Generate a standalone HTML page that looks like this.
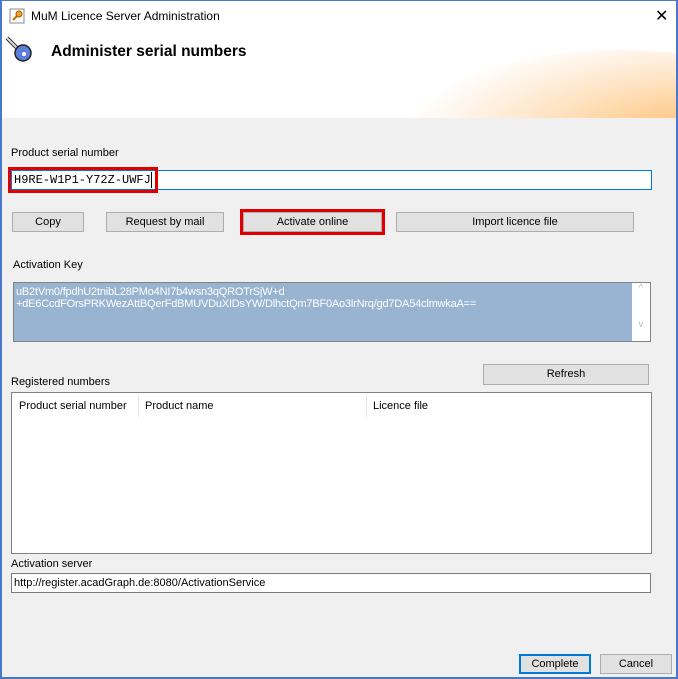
<!DOCTYPE html>
<html><head><style>
*{margin:0;padding:0;box-sizing:border-box}
body{width:678px;height:679px;overflow:hidden;font-family:"Liberation Sans",sans-serif;font-size:11px;color:#000;background:#f0f0f0;position:relative}
.a{position:absolute}
.btn{position:absolute;background:#e1e1e1;border:1px solid #adadad;text-align:center;line-height:19px;font-size:11px}
.tb{position:absolute;background:#fff;border:1px solid #7a7a7a}
.red{position:absolute;border:3px solid #e00000}
</style></head><body>
<div class="a" style="left:0;top:0;width:678px;height:118px;background:#fff;overflow:hidden">
 <div class="a" style="left:400px;top:50px;width:440px;height:200px;border-radius:50%;background:radial-gradient(ellipse at 70% 45%,#ffbf75 0%,#ffcf95 20%,#ffe2c0 38%,#fff1e2 55%,#fff 70%)"></div>
</div>
<div class="a" style="left:0;top:0;width:678px;height:679px;border:2px solid #4a78c8;border-top-width:1px"></div>
<svg class="a" style="left:9px;top:8px" width="16" height="16"><rect x="1" y="1" width="14" height="14" fill="#fff" stroke="#888"/><path d="M4 12 L9 7" stroke="#c07000" stroke-width="2"/><circle cx="10" cy="6" r="3" fill="#f0a030" stroke="#a06000"/></svg>
<div class="a" style="left:31px;top:9px;font-size:12px">MuM Licence Server Administration</div>
<div class="a" style="left:655px;top:6px;font-size:16px">✕</div>
<svg class="a" style="left:4px;top:34px" width="32" height="30"><path d="M3 4 L14 15" stroke="#222" stroke-width="4"/><path d="M3 4 L14 15" stroke="#ddd" stroke-width="2"/><circle cx="19" cy="19" r="8" fill="#5b7fd8" stroke="#222" stroke-width="1.5"/><circle cx="20" cy="20" r="2" fill="#fff"/></svg>
<div class="a" style="left:51px;top:43px;font-size:15.5px;font-weight:bold">Administer serial numbers</div>
<div class="a" style="left:11px;top:147px">Product serial number</div>
<div class="tb" style="left:11px;top:170px;width:641px;height:20px;border-color:#0078d7"></div>
<div class="a" style="left:14px;top:173px;font-family:'Liberation Mono',monospace;font-size:12px">H9RE-W1P1-Y72Z-UWFJ</div>
<div class="a" style="left:151px;top:172px;width:1px;height:16px;background:#000"></div>
<div class="red" style="left:8px;top:167px;width:150px;height:26px"></div>
<div class="btn" style="left:12px;top:212px;width:72px;height:20px">Copy</div>
<div class="btn" style="left:106px;top:212px;width:118px;height:20px">Request by mail</div>
<div class="btn" style="left:243px;top:212px;width:139px;height:20px">Activate online</div>
<div class="red" style="left:240px;top:209px;width:145px;height:26px"></div>
<div class="btn" style="left:396px;top:212px;width:238px;height:20px">Import licence file</div>
<div class="a" style="left:13px;top:259px">Activation Key</div>
<div class="tb" style="left:13px;top:282px;width:638px;height:60px;background:#98b4d0;border-color:#828282"></div>
<div class="a" style="left:632px;top:283px;width:18px;height:58px;background:#fff;color:#bbb;font-size:10px;text-align:center;line-height:12px">^<br><br><br>v</div>
<div class="a" style="left:16px;top:286px;color:#fff;font-size:11px;line-height:12px;letter-spacing:-0.2px">uB2tVm0/fpdhU2tnibL28PMo4NI7b4wsn3qQROTrSjW+d<br>+dE6CcdFOrsPRKWezAttBQerFdBMUVDuXIDsYW/DlhctQm7BF0Ao3lrNrq/gd7DA54clmwkaA==</div>
<div class="a" style="left:11px;top:376px">Registered numbers</div>
<div class="btn" style="left:483px;top:364px;width:166px;height:21px">Refresh</div>
<div class="tb" style="left:11px;top:392px;width:641px;height:162px;border-color:#828282"></div>
<div class="a" style="left:19px;top:400px">Product serial number</div>
<div class="a" style="left:138px;top:395px;width:1px;height:22px;background:#e5e5e5"></div>
<div class="a" style="left:145px;top:400px">Product name</div>
<div class="a" style="left:366px;top:395px;width:1px;height:22px;background:#e5e5e5"></div>
<div class="a" style="left:373px;top:400px">Licence file</div>
<div class="a" style="left:11px;top:558px">Activation server</div>
<div class="tb" style="left:11px;top:573px;width:640px;height:20px"></div>
<div class="a" style="left:14px;top:577px">http://register.acadGraph.de:8080/ActivationService</div>
<div class="btn" style="left:519px;top:654px;width:72px;height:20px;border:2px solid #0078d7;line-height:17px">Complete</div>
<div class="btn" style="left:600px;top:654px;width:72px;height:20px">Cancel</div>
</body></html>
